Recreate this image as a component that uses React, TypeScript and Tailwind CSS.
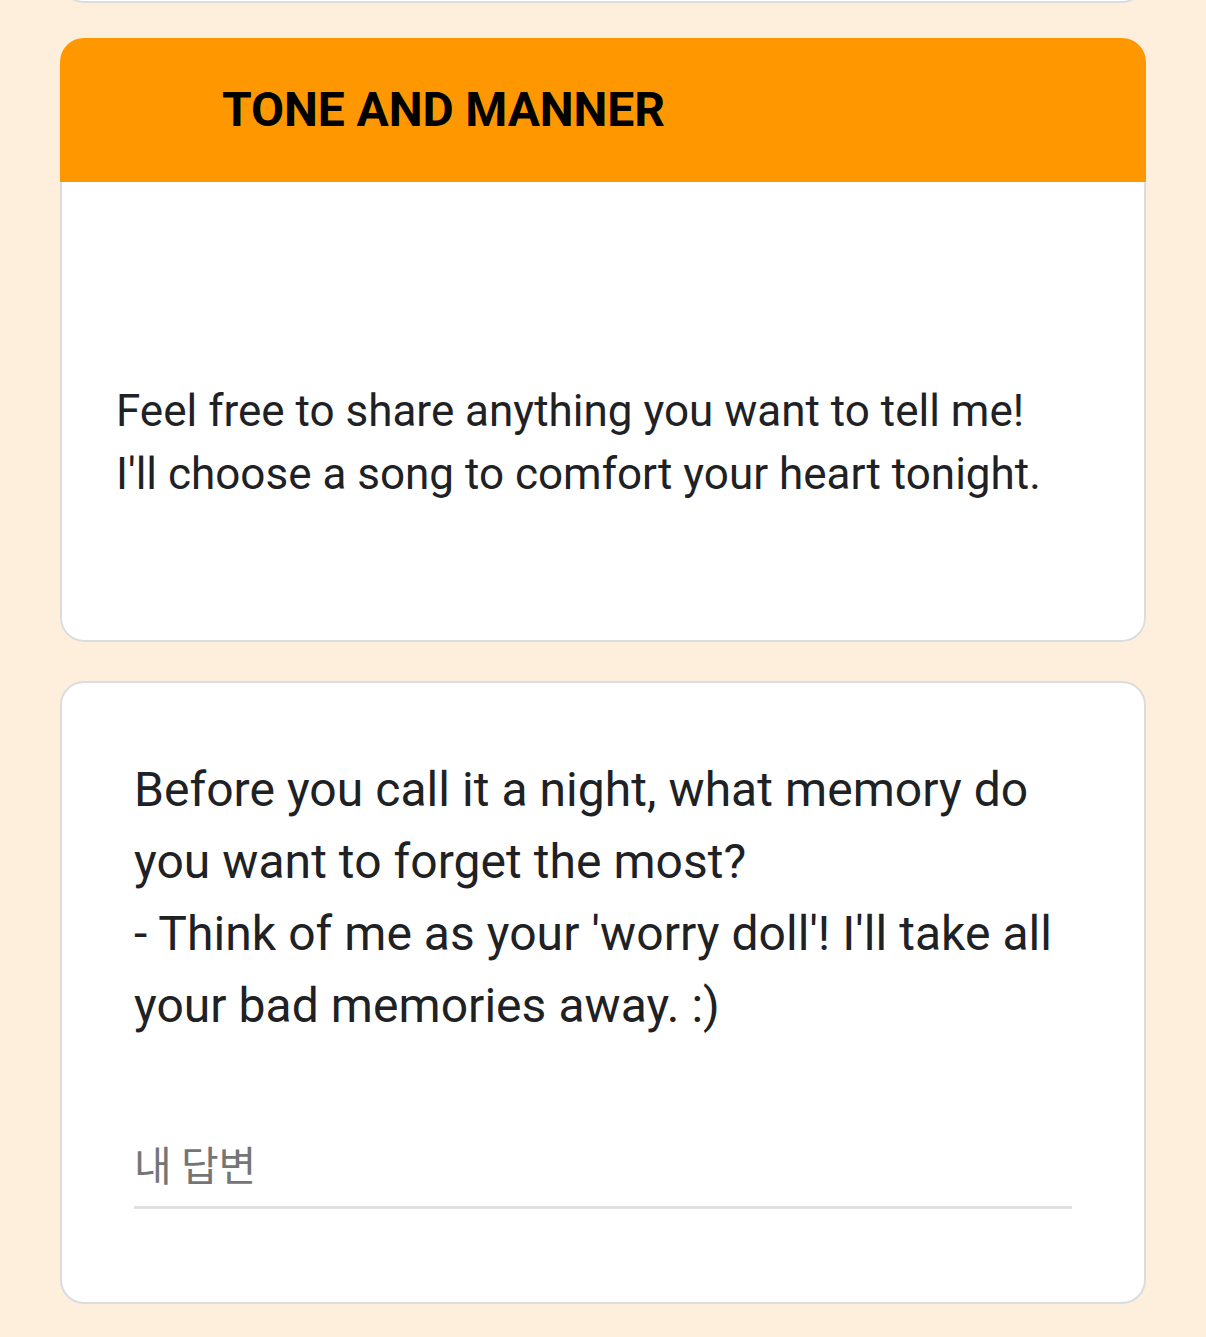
import React from 'react'

const font = { fontFamily: 'Roboto, "Noto Sans CJK KR", sans-serif' }

function SectionHeaderCard({ title, children }: { title: string; children: React.ReactNode }) {
  return (
    <div className="mt-[35px] overflow-hidden rounded-[24px]">
      <div className="flex h-[144px] items-center bg-[#ff9800] pl-[162px]">
        <h2 className="text-[48px] font-bold leading-none tracking-[-0.1px] text-black">{title}</h2>
      </div>
      <div className="rounded-b-[24px] border-2 border-t-0 border-[#dadce0] bg-white pb-[134px] pl-[54px] pr-[30px] pt-[198px]">
        {children}
      </div>
    </div>
  )
}

function QuestionCard({ lines, placeholder }: { lines: string[]; placeholder: string }) {
  return (
    <div className="mt-[39px] rounded-[24px] border-2 border-[#dadce0] bg-white pb-[93px] pl-[72px] pr-[60px] pt-[71px]">
      <div className="text-[48px] leading-[72px] tracking-[0.05px] text-[#202124]">
        {lines.map((line) => (
          <div key={line} className="whitespace-nowrap">{line}</div>
        ))}
      </div>
      <div className="mr-[12px] mt-[97px] border-b-[3px] border-[#e0e0e0] pb-[18px]">
        <span
          className="text-[41px] leading-[48px] text-[#757575]"
          style={{ fontFamily: '"Noto Sans CJK KR", Roboto, sans-serif' }}
        >
          {placeholder}
        </span>
      </div>
    </div>
  )
}

export default function App() {
  return (
    <div className="min-h-screen overflow-hidden bg-[#fdefdb]" style={font}>
      <div className="mx-[60px]">
        {/* tail of the previous card */}
        <div className="-mt-[40px] h-[43px] rounded-b-[24px] border-2 border-t-0 border-[#dadce0] bg-white" />

        <SectionHeaderCard title="TONE AND MANNER">
          <p className="whitespace-nowrap text-[44px] leading-[63px] text-[#202124]">
            Feel free to share anything you want to tell me!
            <br />
            I'll choose a song to comfort your heart tonight.
          </p>
        </SectionHeaderCard>

        <QuestionCard
          lines={[
            'Before you call it a night, what memory do',
            'you want to forget the most?',
            "- Think of me as your 'worry doll'! I'll take all",
            'your bad memories away. :)',
          ]}
          placeholder="내 답변"
        />
      </div>
    </div>
  )
}
